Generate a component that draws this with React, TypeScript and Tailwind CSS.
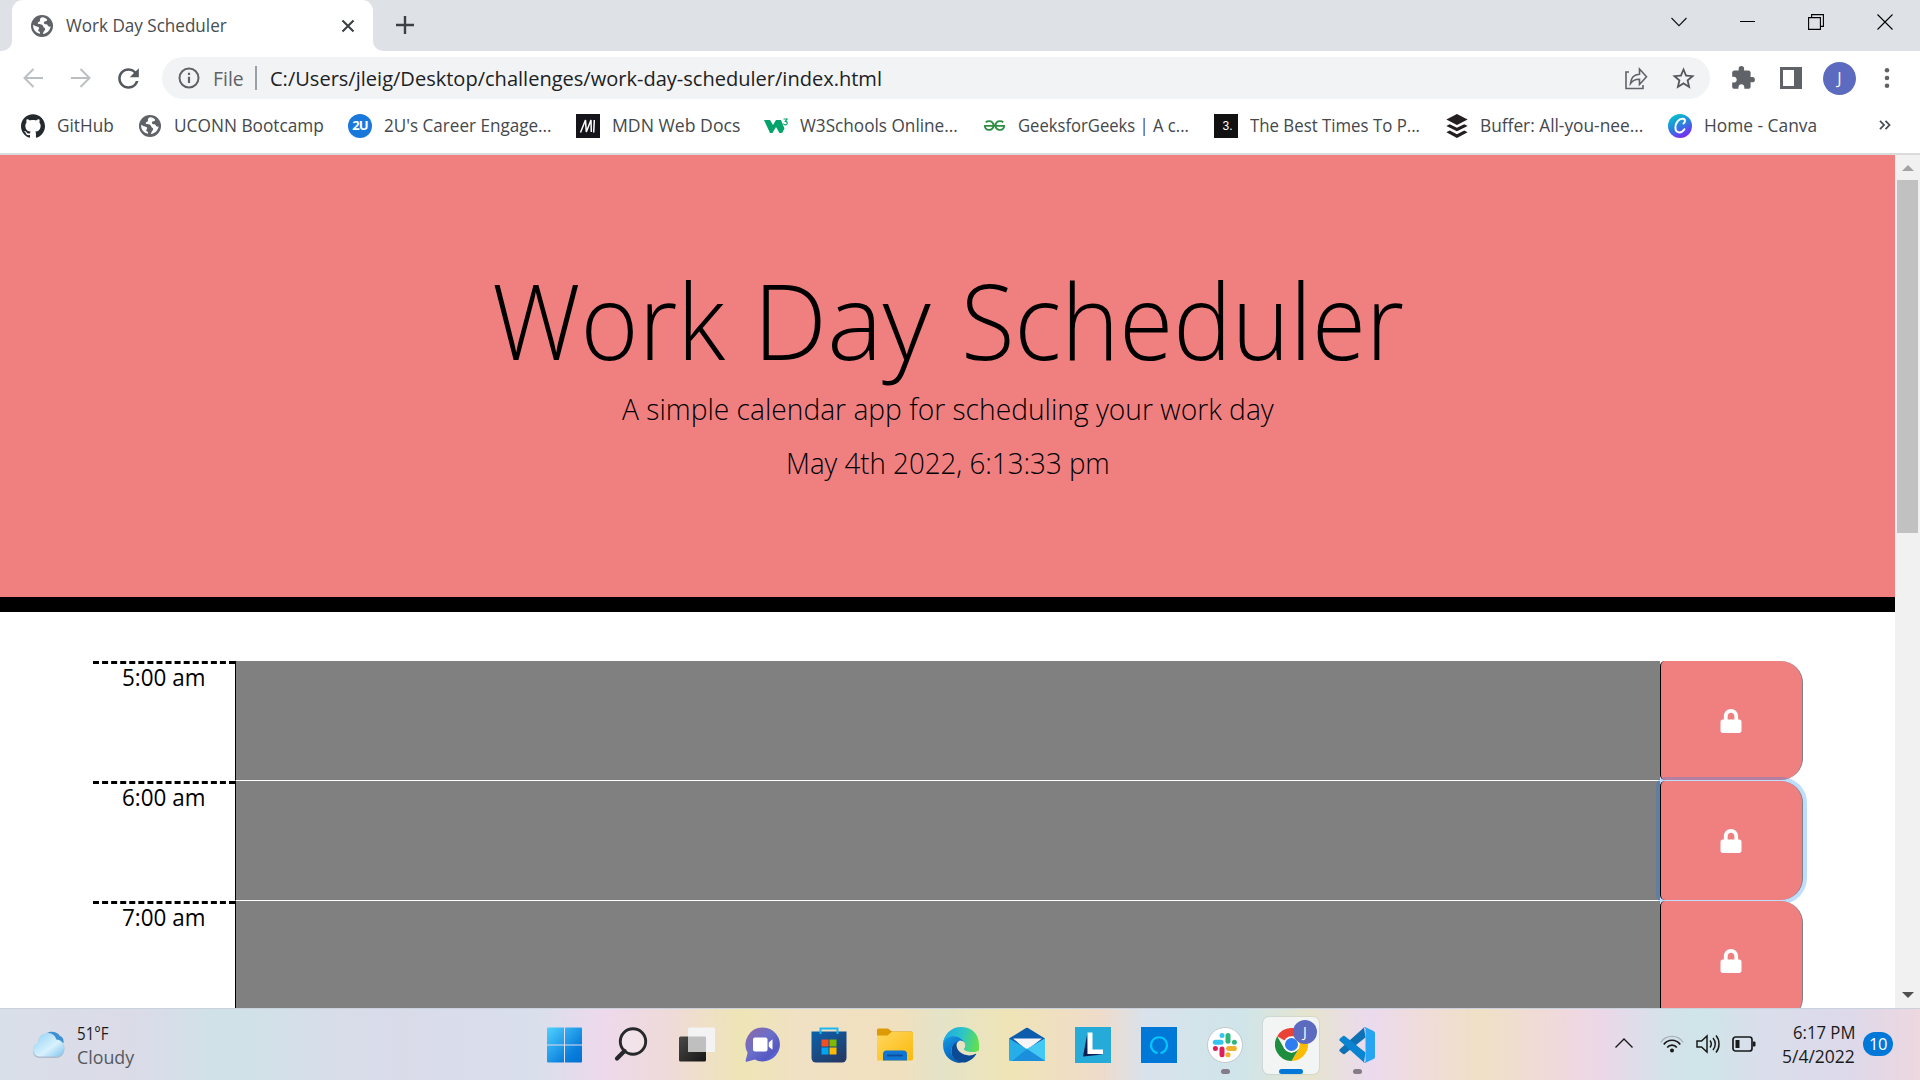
import React, { useLayoutEffect, useRef, useState } from "react";
import { SiBuffer, SiGithub, SiGeeksforgeeks } from "react-icons/si";
import { FaLock } from "react-icons/fa";
import { MdExtension, MdRefresh, MdStarBorder } from "react-icons/md";

/* One line of text, fitted horizontally to a given width. */
function Fit({ w, className = "", children }: { w: number; className?: string; children: string }) {
  const ref = useRef<HTMLSpanElement>(null);
  const [scale, setScale] = useState(1);
  useLayoutEffect(() => {
    if (ref.current) setScale(w / ref.current.offsetWidth);
  }, [w]);
  return (
    <span className={"inline-block shrink-0 " + className} style={{ width: w }}>
      <span ref={ref} className="inline-block origin-left whitespace-nowrap" style={{ transform: `scaleX(${scale})` }}>
        {children}
      </span>
    </span>
  );
}

function Globe() {
  return (
    <svg viewBox="0 0 22 22" className="size-[22px]">
      <circle cx="11" cy="11" r="11" fill="#5f6368" />
      <path d="M11 2.200c-1.500.6-2.300 1.700-2 2.900.2.900-.2 1.500-1.300 1.900-1.400.5-1.200 1.600-.2 2 .8.300 3 .1 3.900.900 1 .900.700 2.300 1.900 2.800 1.100.5 1.200 1.700.4 2.600-.9 1-1.600 2.300-1.900 3.800 4-.4 7.300-3.500 7.800-7.600-1.400.4-2.400 0-2.800-1-.3-.9-1-1.300-2-1.300-1.300 0-2-.7-1.900-1.800.1-1 1-1.200 1.900-1.200.9 0 1.200-.6 1.300-1.600C15.200 3 13.200 2.100 11 2.200Z" fill="#fff" />
      <path d="M2.200 9.800c-.5 4.700 2.600 8.300 6.800 9 .3-1.200-.1-1.900-1-2.300-1.100-.5-.9-1.700-.2-2.600.6-.8.300-1.500-.7-1.900-1.200-.4-3.300-1-4.900-2.200Z" fill="#fff" />
    </svg>
  );
}

function W3Icon() {
  return (
    <svg viewBox="0 0 24 16" className="h-4 w-6">
      <path d="M0 2h6l3 5 3-5h5l3.500 8.500L18 15h-2.500L12 9l-3.500 6H6Z" fill="#04a36c" />
      <path d="M19.500 1H23l-1.700 2.300c1.600 0 2 1 1.900 1.900-.1 1.200-1.200 1.900-2.300 1.600-.8-.2-1.400-.7-1.500-1.300" fill="none" stroke="#04a36c" strokeWidth="1.200" />
    </svg>
  );
}

function MdnIcon() {
  return (
    <svg viewBox="0 0 24 24" className="size-6">
      <rect width="24" height="24" fill="#15141a" />
      <path d="M4.500 18.500 9.500 6l.8 12L15 6l.3 12M18.300 6l-.6 12.500" fill="none" stroke="#fff" strokeWidth="1.500" />
    </svg>
  );
}

function CanvaIcon() {
  return (
    <svg viewBox="0 0 24 24" className="size-6">
      <defs>
        <linearGradient id="canva" x1=".2" y1="0" x2=".7" y2="1">
          <stop offset="0" stopColor="#00c9c8" />
          <stop offset=".5" stopColor="#2b80e0" />
          <stop offset="1" stopColor="#8220f5" />
        </linearGradient>
      </defs>
      <circle cx="12" cy="12" r="12" fill="url(#canva)" />
      <path d="M15.500 9.500c1.800-1 2.200-4.500-.5-4.700C10.500 4.500 7.500 9 7.400 13.500c0 5.500 5.600 6.700 9 1.700" fill="none" stroke="#fff" strokeWidth="2" strokeLinecap="round" />
    </svg>
  );
}

const bookmarks = [
  { label: "GitHub", w: 57, box: "w-9", gap: "w-[25px]", icon: <SiGithub className="size-6 text-[#24292e]" /> },
  { label: "UCONN Bootcamp", w: 150, box: "w-[35px]", gap: "w-[24px]", icon: <Globe /> },
  {
    label: "2U's Career Engage...", w: 168, box: "w-9", gap: "w-[24px]",
    icon: <span className="flex size-6 items-center justify-center rounded-full bg-[#1a78db] text-[13px] font-bold leading-none tracking-[-1px] text-white">2U</span>,
  },
  { label: "MDN Web Docs", w: 128, box: "w-9", gap: "w-[24px]", icon: <MdnIcon /> },
  { label: "W3Schools Online...", w: 158, box: "w-9", gap: "w-[26px]", icon: <W3Icon /> },
  { label: "GeeksforGeeks | A c...", w: 171, box: "w-[34px]", gap: "w-[25px]", icon: <SiGeeksforgeeks className="size-[21px] text-[#2f8d46]" /> },
  {
    label: "The Best Times To P...", w: 170, box: "w-9", gap: "w-[25px]",
    icon: <span className="flex size-6 items-center justify-center bg-[#111] pl-[3px] font-['Liberation_Sans'] text-[12px] leading-none text-white">3.</span>,
  },
  { label: "Buffer: All-you-nee...", w: 163, box: "w-[35px]", gap: "w-[25px]", icon: <SiBuffer className="size-6 text-[#231f20]" /> },
  { label: "Home - Canva", w: 113, box: "w-9", gap: "w-[61px]", icon: <CanvaIcon /> },
];

function TabStrip() {
  return (
    <div className="flex h-[51px] bg-[#dee1e6]">
      <div className="flex w-3 items-end bg-white">
        <div className="h-full w-3 rounded-br-[10px] bg-[#dee1e6]" />
      </div>
      <div className="w-[361px] bg-[#dee1e6]">
        <div className="flex h-[51px] items-center rounded-t-[11px] bg-white pl-[19px]">
          <Globe />
          <Fit w={161} className="-mt-px ml-[13px] text-[17.500px] leading-[24px] text-[#494c50]">Work Day Scheduler</Fit>
          <svg viewBox="0 0 14 14" className="ml-[114px] size-[14px]" stroke="#3c4043" strokeWidth="2.100">
            <path d="M1.500 1.500l11 11M12.500 1.500l-11 11" />
          </svg>
        </div>
      </div>
      <div className="w-3 bg-white">
        <div className="h-full w-3 rounded-bl-[10px] bg-[#dee1e6]" />
      </div>
      <svg viewBox="0 0 18 18" className="ml-[11px] mt-4 size-[18px]" stroke="#3c4043" strokeWidth="2.400">
        <path d="M9 0v18M0 9h18" />
      </svg>
      <div className="ml-auto flex h-[43px] items-center pr-[28px]">
        <svg viewBox="0 0 16 10" className="mr-[53px] h-[10px] w-4" fill="none" stroke="#111" strokeWidth="1.100">
          <path d="M.5 1 8 8.700 15.500 1" />
        </svg>
        <div className="mr-[53px] h-px w-[15px] bg-black" />
        <svg viewBox="0 0 16 16" className="mr-[53px] size-4" fill="none" stroke="#000" strokeWidth="1.100">
          <path d="M.6 3.600h11.800v11.800H.6ZM3.600 3.600V.6h11.800v11.800h-3" />
        </svg>
        <svg viewBox="0 0 16 16" className="-mr-px size-4" stroke="#000" strokeWidth="1.100">
          <path d="M.5.5l15 15M15.500.5l-15 15" />
        </svg>
      </div>
    </div>
  );
}

function Toolbar() {
  return (
    <div className="flex h-[54px] items-center pl-[23px] pr-[27px]">
      <svg viewBox="0 0 20 20" className="size-5" fill="none" stroke="#bcbfc2" strokeWidth="2">
        <path d="M20 10H2M10.500 1 1.500 10l9 9" />
      </svg>
      <svg viewBox="0 0 20 20" className="ml-7 size-5" fill="none" stroke="#bcbfc2" strokeWidth="2">
        <path d="M0 10h18M9.500 1l9 9-9 9" />
      </svg>
      <MdRefresh className="ml-[22px] size-[31px] text-[#55595e]" />
      <div className="ml-[18px] flex h-[42px] w-[1548px] items-center rounded-full bg-[#f1f3f4] pl-[16px] pr-[13px]">
        <svg viewBox="0 0 22 22" className="size-[22px]" fill="none" stroke="#5f6368" strokeWidth="2">
          <circle cx="11" cy="11" r="9.500" />
          <path d="M11 9.800V16M11 5.800v2.200" strokeWidth="2.200" />
        </svg>
        <Fit w={31} className="ml-[13px] mt-px text-[20px] leading-[28px] text-[#5f6368]">File</Fit>
        <div className="ml-[11px] h-6 w-0.5 bg-[#9aa0a6]" />
        <Fit w={612} className="ml-[12.500px] mt-px text-[20px] leading-[28px] text-[#202124]">
          C:/Users/jleig/Desktop/challenges/work-day-scheduler/index.html
        </Fit>
        <svg viewBox="0 0 24 24" className="ml-auto size-6" fill="none" stroke="#5f6368" strokeWidth="1.600">
          <path d="M5 6H2v16.500h17V19" />
          <path d="M6.500 17.500c.4-6 4-9 9-9.300V3l7 7.800-7 7.700v-5.200c-4-.1-7 1.200-9 4.200Z" />
        </svg>
        <MdStarBorder className="ml-[22px] size-[27px] text-[#55595e]" />
      </div>
      <MdExtension className="ml-[20px] size-[26px] text-[#5f6368]" />
      <div className="ml-6 h-[22px] w-[22px] border-[3px] border-r-[8px] border-[#5f6368]" />
      <div className="ml-[21px] flex size-[33px] items-center justify-center rounded-full bg-[#5c6bc0] text-[16px] leading-none text-white">J</div>
      <svg viewBox="0 0 6 20" className="ml-auto h-5 w-[12px]" fill="#5f6368">
        <circle cx="3" cy="2.300" r="2.300" />
        <circle cx="3" cy="10" r="2.300" />
        <circle cx="3" cy="17.700" r="2.300" />
      </svg>
    </div>
  );
}

function Bookmarks() {
  return (
    <div className="flex h-[50px] items-center border-b-2 border-[#d9dbdd] pb-[7px] pl-[21px]">
      {bookmarks.map((b) => (
        <React.Fragment key={b.label}>
          <span className={"flex shrink-0 items-center " + b.box}>{b.icon}</span>
          <Fit w={b.w} className="-mt-px text-[17.500px] leading-6 text-[#45484c]">{b.label}</Fit>
          <span className={"shrink-0 " + b.gap} />
        </React.Fragment>
      ))}
      <svg viewBox="0 0 12 10" className="ml-px mt-[-2px] h-[10px] w-3" fill="none" stroke="#4a4d51" strokeWidth="1.800">
        <path d="M1 .8 5 5 1 9.200M6.500.8l4 4.200-4 4.200" />
      </svg>
    </div>
  );
}

function HourRow({ label, focused }: { label: string; focused?: boolean }) {
  return (
    <div className="grid h-[120px] shrink-0 grid-cols-12">
      <div className="border-t-[3px] border-dashed border-black text-center">
        <Fit w={83} className="text-[23.500px] leading-[26px] text-black">{label}</Fit>
      </div>
      <div className="col-span-10 border-b border-l border-b-white border-l-black bg-[#808080]" />
      <button
        className={
          "mb-px flex items-center justify-center rounded-l-[5px] rounded-r-[22px] border-l border-r border-l-black border-r-[#808080] bg-[#f08080] " +
          (focused ? "shadow-[0_0_0_4px_rgba(0,123,255,0.25)]" : "")
        }
      >
        <FaLock className="size-6 text-white" />
      </button>
    </div>
  );
}

function Page() {
  return (
    <div className="flex h-[853px] bg-white">
      <main className="flex w-[1895px] flex-col overflow-hidden">
        <header className="flex h-[457px] shrink-0 flex-col items-center border-b-[15px] border-black bg-[#f08080] pt-[104px] text-black">
          <h1 className="flex h-[120px] text-[106px] font-light leading-[120px]">
            <Fit w={233}>Work</Fit>{" "}
            <Fit w={178} className="ml-[28px]">Day</Fit>{" "}
            <Fit w={443} className="ml-[30px]">Scheduler</Fit>
          </h1>
          <p className="mt-[10px] h-10 text-[30px] font-light leading-10"><Fit w={652}>A simple calendar app for scheduling your work day</Fit></p>
          <p className="mt-[14px] h-10 text-[30px] font-light leading-10"><Fit w={324}>May 4th 2022, 6:13:33 pm</Fit></p>
        </header>
        <div className="flex flex-col px-[92.500px] pt-[49px]">
          <HourRow label="5:00 am" />
          <HourRow label="6:00 am" focused />
          <HourRow label="7:00 am" />
        </div>
      </main>
      <aside className="flex w-[25px] flex-col items-center bg-[#f1f1f1] py-[10px]">
        <svg viewBox="0 0 12 6" className="h-1.5 w-3" fill="#a3a3a3"><path d="M0 6 6 0l6 6Z" /></svg>
        <div className="mt-[9px] h-[353px] w-[21px] bg-[#c1c1c1]" />
        <svg viewBox="0 0 12 6" className="mt-auto h-1.5 w-3" fill="#505050"><path d="M0 0h12L6 6Z" /></svg>
      </aside>
    </div>
  );
}

function StartIcon() {
  return (
    <svg viewBox="0 0 36 36" className="size-9">
      <defs>
        <linearGradient id="win" gradientUnits="userSpaceOnUse" x1="0" y1="0" x2="36" y2="36">
          <stop offset="0" stopColor="#4fd2ff" />
          <stop offset=".7" stopColor="#0a7fdc" />
          <stop offset="1" stopColor="#0070d0" />
        </linearGradient>
      </defs>
      <g fill="url(#win)">
        <path d="M1 .5h16v17H0v-16A1 1 0 0 1 1 .5Z" />
        <path d="M18 .5h16a1 1 0 0 1 1 1v16H18Z" />
        <path d="M0 18.500h17v17H1a1 1 0 0 1-1-1Z" />
        <path d="M18 18.500h17v16a1 1 0 0 1-1 1H18Z" />
      </g>
    </svg>
  );
}

function SearchIcon() {
  return (
    <svg viewBox="0 0 36 36" className="size-9" fill="none" stroke="#26282b">
      <circle cx="20" cy="14.500" r="12.700" strokeWidth="2.900" fill="#ffffff40" />
      <path d="M11.500 24 4 31.500" strokeWidth="4.200" strokeLinecap="round" />
    </svg>
  );
}

function TaskViewIcon() {
  return (
    <svg viewBox="0 0 36 36" className="size-9">
      <defs>
        <linearGradient id="tv" x1="0" y1="0" x2="1" y2="1">
          <stop offset="0" stopColor="#4a4a48" />
          <stop offset="1" stopColor="#161616" />
        </linearGradient>
      </defs>
      <rect x="0" y="9.500" width="27" height="25" rx="1.500" fill="url(#tv)" />
      <rect x="9" y=".5" width="27" height="24.500" rx="1.500" fill="#f3f3f3" />
      <path d="M9 9.500h17a1 1 0 0 1 1 1V25H10a1 1 0 0 1-1-1Z" fill="#bfbfbf" />
    </svg>
  );
}

function ChatIcon() {
  return (
    <svg viewBox="0 0 36 36" className="size-9">
      <defs>
        <linearGradient id="chat" x1="0" y1="0" x2="1" y2="1">
          <stop offset="0" stopColor="#9166a6" />
          <stop offset=".45" stopColor="#6a6fc8" />
          <stop offset=".75" stopColor="#5558c4" />
          <stop offset="1" stopColor="#6584e8" />
        </linearGradient>
      </defs>
      <path d="M18 .5a17 17 0 1 1-8.300 31.900L1.800 34.800c-.8.200-1.400-.5-1.200-1.300l2-7.800A17 17 0 0 1 18 .5Z" fill="url(#chat)" />
      <rect x="8" y="10.500" width="14.500" height="14" rx="2" fill="#fff" />
      <path d="M23.800 15.500l3.700-3.200v10.500l-3.700-3.100Z" fill="#fff" />
    </svg>
  );
}

function StoreIcon() {
  return (
    <svg viewBox="0 0 36 36" className="size-9">
      <defs>
        <linearGradient id="store" x1="0" y1="0" x2=".7" y2="1">
          <stop offset="0" stopColor="#0b62ae" />
          <stop offset="1" stopColor="#243a66" />
        </linearGradient>
      </defs>
      <path d="M.5 4.500h35V31a4.500 4.500 0 0 1-4.500 4.500H5A4.500 4.500 0 0 1 .5 31Z" fill="url(#store)" />
      <path d="M9.500 7V1.500h17V7" fill="none" stroke="#1cb8f0" strokeWidth="2" />
      <path d="M10.500 12.500h7v7h-7Z" fill="#f25022" />
      <path d="M18.500 12.500h7v7h-7Z" fill="#7fba00" />
      <path d="M10.500 20.500h7v7h-7Z" fill="#00a4ef" />
      <path d="M18.500 20.500h7v7h-7Z" fill="#ffb900" />
    </svg>
  );
}

function FolderIcon() {
  return (
    <svg viewBox="0 0 36 36" className="size-9">
      <defs>
        <linearGradient id="fold" x1="0" y1="0" x2="1" y2="1">
          <stop offset="0" stopColor="#ffd75e" />
          <stop offset="1" stopColor="#fbb90c" />
        </linearGradient>
      </defs>
      <path d="M0 3a1.500 1.500 0 0 1 1.500-1.500h9.500l4 3h19.500A1.500 1.500 0 0 1 36 6v8H0Z" fill="#dd9a02" />
      <path d="M0 8.500h10.500l4-3.500H36v27a1.500 1.500 0 0 1-1.500 1.500h-33A1.500 1.500 0 0 1 0 32Z" fill="url(#fold)" />
      <path d="M6 33.500V27a3.500 3.500 0 0 1 3.500-3.500h17A3.500 3.500 0 0 1 30 27v6.500Z" fill="#1176d2" />
      <path d="M11 28.500h14" stroke="#0c4f9e" strokeWidth="2" strokeLinecap="round" />
    </svg>
  );
}

function EdgeIcon() {
  return (
    <svg viewBox="0 0 256 256" className="size-9">
      <defs>
        <linearGradient id="eb" x1=".2" y1="0" x2=".7" y2="1">
          <stop offset="0" stopColor="#1b9de2" />
          <stop offset=".5" stopColor="#0a78d0" />
          <stop offset="1" stopColor="#0c59a4" />
        </linearGradient>
        <linearGradient id="et" x1="0" y1=".3" x2="1" y2=".5">
          <stop offset="0" stopColor="#1fa8e8" />
          <stop offset=".5" stopColor="#2cc4c8" />
          <stop offset="1" stopColor="#62e04e" />
        </linearGradient>
      </defs>
      <path d="M231 190c-3 2-7 4-11 5a102 102 0 0 1-36 7c-47 0-88-33-88-75 0-11 7-21 17-27-43 2-54 46-54 72 0 73 68 81 82 81 8 0 20-2 27-5h1a128 128 0 0 0 67-54c2-3-2-6-5-4Z" fill="#0c4a94" />
      <path d="M106 241A79 79 0 0 1 59 172c0-36 22-60 54-72 3-2 8-4 15-3 10 0 20 5 26 13-1-45-53-68-88-68C25 42 0 86 0 128c0 80 62 128 128 128 0-5-11-9-22-15Z" fill="url(#eb)" />
      <path d="M153 149c-1 2-4 4-4 8 0 3 2 6 6 9 20 14 57 12 57 12 15 0 29-4 41-11 13-8 3-26 3-46C253 38 195 0 128 0 58 0 2 55 0 125c1-33 35-60 74-60 3 0 22 0 39 9 29 15 45 37 45 55 0 9-3 17-5 20Z" fill="url(#et)" />
    </svg>
  );
}

function MailIcon() {
  return (
    <svg viewBox="0 0 36 36" className="size-9">
      <path d="M0 11.500 17 1a2 2 0 0 1 2 0l17 10.500-4 8H4Z" fill="#0d5cad" />
      <path d="M4 11.500h29L18 23Z" fill="#f6f6f6" />
      <path d="M0 11.500 18 22l18-10.500V34H1.500A1.500 1.500 0 0 1 0 32.500Z" fill="#25aee8" />
      <path d="M36 11.500 18 22l18 12Z" fill="#44c8f4" />
      <path d="M18 22 36 34H3Z" fill="#1c8fdc" />
    </svg>
  );
}

function LIcon() {
  return (
    <svg viewBox="0 0 36 36" className="size-9">
      <rect width="36" height="36" fill="#26abd9" />
      <path d="M12.500 5.500 8 29.500l20-2-15-1Z" fill="#0d1f52" />
      <path d="M12.500 5.500h5v17H28V27H12.500Z" fill="#fff" />
    </svg>
  );
}

function AlexaIcon() {
  return (
    <svg viewBox="0 0 36 36" className="size-9">
      <rect width="36" height="36" fill="#0078d7" />
      <path d="M16.500 26a8 8 0 1 1 3 0" fill="none" stroke="#00caff" strokeWidth="2" />
    </svg>
  );
}

function SlackIcon() {
  return (
    <svg viewBox="0 0 36 36" className="size-9">
      <circle cx="18" cy="18" r="17.500" fill="#fff" stroke="#b9bfc6" strokeWidth=".8" />
      <g strokeWidth="5" strokeLinecap="round">
        <path d="M8.300 15.300h5.800" stroke="#36c5f0" />
        <path d="M15 8.600h.01" stroke="#36c5f0" />
        <path d="M21 8.500v5.700" stroke="#2eb67d" />
        <path d="M27.400 15.300h.01" stroke="#2eb67d" />
        <path d="M21.600 21.400h5.800" stroke="#ecb22e" />
        <path d="M21 27.700h.01" stroke="#ecb22e" />
        <path d="M15 22v5.700" stroke="#e01e5a" />
        <path d="M8.400 21.400h.01" stroke="#e01e5a" />
      </g>
    </svg>
  );
}

function ChromeIcon() {
  return (
    <svg viewBox="0 0 48 48" className="mt-px size-[33px]">
      <path d="M24 24 3.200 12A24 24 0 0 1 44.800 12Z" fill="#ea4335" />
      <path d="M24 12h20.800A24 24 0 0 1 24 48l10.400-18Z" fill="#fbbc04" />
      <path d="M3.200 12 13.600 30 24 36l10.400-6L24 48A24 24 0 0 1 3.200 12Z" fill="#1e8e3e" />
      <circle cx="24" cy="24" r="12" fill="#fff" />
      <circle cx="24" cy="24" r="9.500" fill="#2f7df0" />
    </svg>
  );
}

function CodeIcon() {
  return (
    <svg viewBox="0 0 36 36" className="size-9">
      <path d="M26.500 10.500 6 26.700a2 2 0 0 1-2.600-.1L1 24.400a1.700 1.700 0 0 1 0-2.500L25 .6Z" fill="#0f70b3" />
      <path d="M26.500 25.500 6 9.300a2 2 0 0 0-2.600.1L1 11.600a1.700 1.700 0 0 0 0 2.500l24 21.300Z" fill="#0a84d0" />
      <path d="M26.500 35.700a2.500 2.500 0 0 1-2.700-.5c1 .9 2.700.2 2.700-1.200V2c0-1.400-1.700-2.100-2.700-1.200A2.500 2.500 0 0 1 26.500.3l8 3.700A2.500 2.500 0 0 1 36 6.300v23.400a2.500 2.500 0 0 1-1.500 2.300Z" fill="#27a5f2" />
    </svg>
  );
}

function Cloud() {
  return (
    <svg viewBox="0 0 34 27" className="h-[27px] w-[34px]">
      <defs>
        <linearGradient id="cl" x1="0" y1="0" x2="1" y2="1">
          <stop offset="0" stopColor="#8fd0f5" />
          <stop offset=".6" stopColor="#d8f1fd" />
          <stop offset="1" stopColor="#7cc3ee" />
        </linearGradient>
      </defs>
      <path d="M15 2.500C20-1 27 1 29 5c3 1 4 4 3.500 7L18 8Z" fill="#3f8fd2" />
      <path d="M8 27a7.500 7.500 0 0 1-1-14.500C7 5.500 12 2 17 2.500c5 0 7.500 3 8.500 6.500 5 0 8 4 8 8.500C33.500 23 30 27 25.500 27Z" fill="#93a7bb" opacity=".6" />
      <path d="M8 25.500a7.200 7.200 0 0 1-.8-14C7.500 5 12 1.500 17 2c4.500 0 7.500 3 8.300 6.500 4.700 0 7.700 4 7.700 8.500 0 5-3.500 8.500-7.500 8.500Z" fill="url(#cl)" />
    </svg>
  );
}

const apps = [
  { id: "start", icon: <StartIcon /> },
  { id: "search", icon: <SearchIcon /> },
  { id: "tasks", icon: <TaskViewIcon /> },
  { id: "chat", icon: <ChatIcon /> },
  { id: "store", icon: <StoreIcon /> },
  { id: "files", icon: <FolderIcon /> },
  { id: "edge", icon: <EdgeIcon /> },
  { id: "mail", icon: <MailIcon /> },
  { id: "l", icon: <LIcon /> },
  { id: "alexa", icon: <AlexaIcon /> },
  { id: "slack", icon: <SlackIcon />, running: true },
  { id: "chrome", icon: <ChromeIcon />, active: true },
  { id: "code", icon: <CodeIcon />, running: true },
];

function Taskbar() {
  return (
    <footer className="flex h-[72px] border-t border-[#c9d1dc] bg-[linear-gradient(90deg,#d9dfe9_0px,#dbdbe8_130px,#cfe2e8_225px,#d8dde9_340px,#d9dbe9_400px,#dadfec_540px,#edd9ec_600px,#efdad9_670px,#eee5b6_740px,#f0e1c4_800px,#f0e0be_900px,#e4e3c8_940px,#efe4b6_1010px,#efdbca_1100px,#d9e2ec_1145px,#cfe5ea_1240px,#e6e4cf_1310px,#ebdaee_1370px,#efdcda_1420px,#efe0c6_1480px,#f0d9dc_1560px,#ecd7e8_1600px,#d3e3ea_1670px,#cfe5e9_1705px,#dadeeb_1760px,#ddd9ea_1850px,#eed7e0_1920px)]">
      <div className="flex w-[532px] pl-[31px] pt-[22px]">
        <Cloud />
        <div className="-mt-[10px] ml-[12px] flex flex-col">
          <Fit w={32} className="h-6 text-[17.500px] leading-6 text-[#1a1a1a]">51°F</Fit>
          <Fit w={57} className="h-6 text-[17.500px] leading-6 text-[#55595f]">Cloudy</Fit>
        </div>
      </div>
      {apps.map((a) => (
        <div key={a.id} className="flex w-[66px] justify-center pt-2">
          <div
            className={
              "relative flex h-[57px] w-14 justify-center rounded-md pt-[10px] " +
              (a.active ? "bg-[#f3f4f4] shadow-[0_0_1px_1px_rgba(0,0,0,0.06)]" : "")
            }
          >
            {a.icon}
            {a.active && <span className="absolute right-0.5 top-[3px] flex size-6 items-center justify-center rounded-full bg-[#5c6bc0] text-[14px] leading-none text-white">J</span>}
            {a.active && <span className="absolute bottom-0 left-4 h-[5px] w-6 rounded-full bg-[#0078d7]" />}
            {a.running && <span className="absolute bottom-0 left-[24px] h-[5px] w-[9px] rounded-full bg-[#847d88]" />}
          </div>
        </div>
      ))}
      <div className="ml-auto flex pr-[27px] text-[#1a1a1a]">
        <svg viewBox="0 0 18 10" className="mr-[27px] mt-[29px] h-[10px] w-[18px]" fill="none" stroke="#1a1a1a" strokeWidth="1.400">
          <path d="M.5 9.500 9 1l8.500 8.500" />
        </svg>
        <svg viewBox="0 0 24 18" className="mr-3 mt-[26px] h-[18px] w-6" fill="none" stroke="#1a1a1a" strokeWidth="1.700">
          <path d="M.8 7.500C6-.6 18-.6 23.200 7.500" stroke="#a9b1b7" strokeWidth="1.300" />
          <path d="M3.800 9.500c4-5.700 12.400-5.700 16.400 0M7.200 12.500c2.400-3.300 7.200-3.300 9.600 0" />
          <circle cx="12" cy="15.500" r="2" fill="#1a1a1a" stroke="none" />
        </svg>
        <svg viewBox="0 0 24 20" className="mr-3 mt-[25px] h-5 w-6" fill="none" stroke="#1a1a1a" strokeWidth="1.500">
          <path d="M1 7h4.500L11 2v16l-5.500-5H1ZM14 6.500c1.500 2 1.500 5 0 7M17 4c3 3.500 3 8.500 0 12M20 1.500c4 4.500 4 12.500 0 17" />
        </svg>
        <svg viewBox="0 0 24 16" className="mt-[27px] h-4 w-6" fill="none" stroke="#1a1a1a" strokeWidth="1.700">
          <rect x="1" y="1" width="19" height="14" rx="2.500" />
          <path d="M3.500 4h4v8h-4ZM21 5.500h1.500a1 1 0 0 1 1 1v3a1 1 0 0 1-1 1H21Z" fill="#1a1a1a" stroke="none" />
        </svg>
        <div className="ml-[26px] mt-[11px] flex flex-col items-end">
          <Fit w={62} className="h-[23.500px] text-[17.500px] leading-6">6:17 PM</Fit>
          <Fit w={73} className="h-6 text-[17.500px] leading-6">5/4/2022</Fit>
        </div>
        <span className="ml-2 mt-[23px] flex h-6 w-[30px] items-center justify-center rounded-full bg-[#0078d7] text-[16.500px] leading-none tracking-[-0.500px] text-white">10</span>
      </div>
    </footer>
  );
}

export default function App() {
  return (
    <div className="flex h-[1080px] w-[1920px] flex-col overflow-hidden bg-white font-['Open_Sans',sans-serif]">
      <TabStrip />
      <Toolbar />
      <Bookmarks />
      <Page />
      <Taskbar />
    </div>
  );
}
